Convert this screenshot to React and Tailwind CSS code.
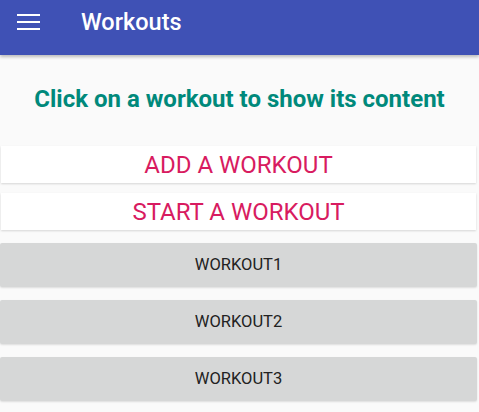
const workouts = ["WORKOUT1", "WORKOUT2", "WORKOUT3"];

const App = () => {
  return (
    <div
      className="h-[412px] w-[479px] overflow-hidden bg-[#fafafa]"
      style={{ fontFamily: "Roboto, 'Noto Sans', sans-serif" }}>
      {/* App bar */}
      <header className="flex h-[55px] items-start bg-[#3f51b5] shadow-[0_2px_3px_rgba(0,0,0,0.25)]">
        <button className="ml-[17px] mt-[14px] flex w-[23px] flex-col gap-[5px]">
          <span className="block h-[2px] w-full bg-white"></span>
          <span className="block h-[2px] w-full bg-white"></span>
          <span className="block h-[2px] w-full bg-white"></span>
        </button>
        <h1 className="ml-[41px] mt-[8px] text-[23.5px] leading-[28px] font-medium text-white">
          Workouts
        </h1>
      </header>

      <p className="mt-[30px] text-center text-[24px] leading-[28px] font-bold text-[#00897b]">
        Click on a workout to show its content
      </p>

      {/* Actions */}
      <div className="mt-[33px] flex flex-col gap-[10px] pl-[1px] pr-[3px]">
        <button className="h-[37px] bg-white text-[24px] leading-[28px] text-[#d81b60] shadow-[0_1px_2px_rgba(0,0,0,0.15)]">
          ADD A WORKOUT
        </button>
        <button className="h-[37px] bg-white text-[24px] leading-[28px] text-[#d81b60] shadow-[0_1px_2px_rgba(0,0,0,0.15)]">
          START A WORKOUT
        </button>
      </div>

      {/* Workout list */}
      <div className="mt-[13px] flex flex-col gap-[13px] pr-[2px]">
        {workouts.map((w) => (
          <button
            key={w}
            className="h-[44px] rounded-[2px] bg-[#d6d7d7] text-[16.5px] leading-[20px] text-[#222] shadow-[0_1px_2px_rgba(0,0,0,0.12)]">
            {w}
          </button>
        ))}
      </div>
    </div>
  );
};

export default App;
